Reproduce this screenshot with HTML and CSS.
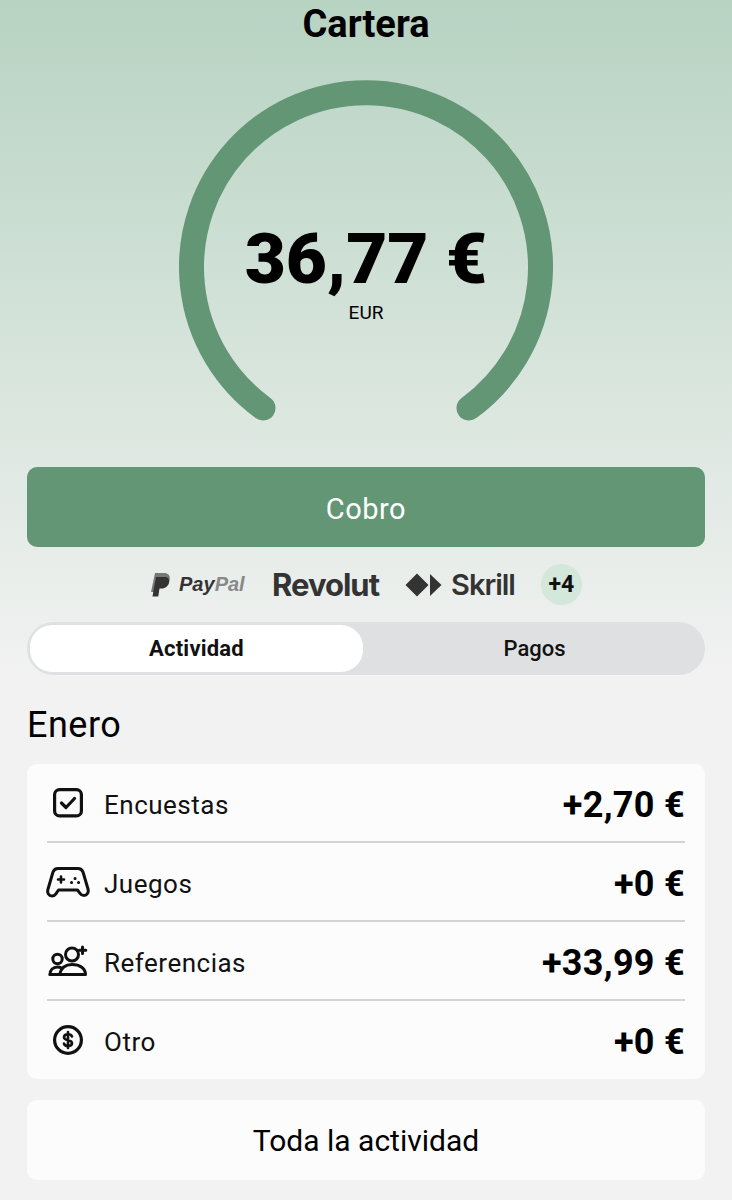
FILE: index.html

```html
<!DOCTYPE html>
<html lang="es">
<head>
  <meta charset="UTF-8" />
  <meta name="viewport" content="width=device-width, initial-scale=1.0"/>
  <title>Cartera</title>
  <link rel="stylesheet" href="styles.css">
</head>
<body>
  <header class="top"><h1>Cartera</h1></header>

  <section class="gauge">
    <svg class="gauge-ring" width="374" height="342" viewBox="0 0 374 342">
      <path d="M84 328 A174.500 174.500 0 1 1 290 328" fill="none" stroke="#639675" stroke-width="25" stroke-linecap="round"/>
    </svg>
    <div class="gauge-text">
      <div class="balance">36,77 €</div>
      <div class="currency">EUR</div>
    </div>
  </section>

  <main>
    <button class="cash-btn">Cobro</button>

    <div class="pay-logos">
      <span class="logo-paypal">
        <svg width="21" height="24" viewBox="0 0 21 24">
          <path d="M5 0h9c4 0 6.500 2.500 5.700 6.500C18.700 11 15.500 13.500 11 13.500H8.500L7.300 19H1z" fill="#777"/>
          <path d="M6 4h8.500c3 0 5.300 2 4.700 5C18.500 13 15.500 15.500 11.500 15.500H9.500L8.300 23.500H2.500l1.200-7z" fill="#333"/>
        </svg>
        <span class="pay">Pay</span><span class="pal">Pal</span>
      </span>
      <span class="logo-revolut">Revolut</span>
      <span class="logo-skrill">
        <svg width="37" height="24" viewBox="0 0 37 24">
          <path d="M12 0.500 L23.500 12 L12 23.500 L0.500 12 Z" fill="#333"/>
          <path d="M25 1 L36.500 12 L25 23 Z" fill="#333"/>
        </svg>
        Skrill
      </span>
      <span class="more">+4</span>
    </div>

    <div class="tabs">
      <button class="tab-button active">Actividad</button>
      <button class="tab-button">Pagos</button>
    </div>

    <h2 class="month">Enero</h2>

    <div class="card">
      <div class="row">
        <span class="row-icon">
          <svg width="34" height="34" viewBox="0 0 34 34" fill="none" stroke="#111" stroke-width="3.200" stroke-linecap="round" stroke-linejoin="round">
            <rect x="3.600" y="3.600" width="26.800" height="26.300" rx="5"/>
            <path d="M10.500 17l4.500 4.500 8.500-9"/>
          </svg>
        </span>
        <span class="row-name">Encuestas</span>
        <span class="row-value">+2,70 €</span>
      </div>
      <div class="row">
        <span class="row-icon">
          <svg width="44" height="32" viewBox="0 0 44 32" fill="none" stroke="#111" stroke-width="3" stroke-linecap="round" stroke-linejoin="round">
            <path d="M12 2.500h20c2.500 0 4 1 5 3.500l5 17c1 3.500-1 6.500-4 6.500-1.800 0-3-.8-4-2.200L31.500 24h-19L9.900 27.800c-1 1.400-2.200 2.200-4 2.200-3 0-5-3-4-6.500L7 6c1-2.500 2.500-3.500 5-3.500z"/>
            <path d="M15 10.500v6M12 13.500h6" stroke-width="2.600"/>
            <path d="M29 12.500h.1M25.500 16.500h.1M32.500 16.500h.1" stroke-width="3"/>
          </svg>
        </span>
        <span class="row-name">Juegos</span>
        <span class="row-value">+0 €</span>
      </div>
      <div class="row">
        <span class="row-icon">
          <svg width="40" height="32" viewBox="0 0 40 32" fill="none" stroke="#111" stroke-width="3" stroke-linecap="round" stroke-linejoin="round">
            <circle cx="9.500" cy="14" r="4.700"/>
            <circle cx="24" cy="9.500" r="6.500"/>
            <path d="M2 29.500c0-4.500 3-7.500 7.500-7.500 1.500 0 3 .4 4 1"/>
            <path d="M2 29.500h35.500c0-6-5.500-10-13.500-10-6.500 0-11 3.500-12.500 10"/>
            <path d="M34.500 2v6.500M31.200 5.200h6.600"/>
          </svg>
        </span>
        <span class="row-name">Referencias</span>
        <span class="row-value">+33,99 €</span>
      </div>
      <div class="row">
        <span class="row-icon">
          <svg width="34" height="34" viewBox="0 0 34 34" fill="none" stroke="#111" stroke-width="3.200" stroke-linecap="round" stroke-linejoin="round">
            <circle cx="17" cy="17" r="13.400"/>
            <path stroke-width="2.600" d="M21 13.500c-.5-1.500-2-2.300-4-2.300-2.300 0-4 1.200-4 3 0 4 8 2 8 5.800 0 1.800-1.700 3-4 3-2 0-3.600-.9-4-2.400M17 9v16"/>
          </svg>
        </span>
        <span class="row-name">Otro</span>
        <span class="row-value">+0 €</span>
      </div>
    </div>

    <button class="all-btn">Toda la actividad</button>
  </main>
</body>
</html>
```

FILE: styles.css

```css
html, body { margin: 0; padding: 0; }
body { width: 732px; height: 1200px; overflow: hidden; font-family: Roboto, "Noto Sans", sans-serif; color: #000; background: linear-gradient(#b7d3c2 0, #dce7e0 420px, #f2f2f2 680px); }
button { font-family: inherit; border: none; cursor: pointer; }

.top { height: 48px; display: flex; align-items: center; justify-content: center; }
h1 { margin: 0; font-size: 38px; font-weight: 700; line-height: 50px; }

.gauge { height: 387px; margin-top: 32px; display: flex; justify-content: center; position: relative; }
.gauge-ring { display: block; }
.gauge-text { position: absolute; top: 139px; left: 0; right: 0; text-align: center; }
.balance { font-size: 71px; font-weight: 900; line-height: 80px; }
.currency { font-size: 19px; line-height: 20px; margin-top: 4px; }

main { padding: 0 27px; }
.cash-btn { display: block; width: 100%; height: 80px; padding: 3px 0 0; background: #639675; color: #fff; font-size: 29px; border-radius: 10px; letter-spacing: 0.5px; }

.pay-logos { height: 75px; display: flex; align-items: center; justify-content: center; gap: 26px; color: #333; }
.logo-paypal { display: flex; align-items: center; gap: 8px; font-size: 20px; font-weight: 800; font-style: italic; font-family: "Liberation Sans", sans-serif; width: 96px; }
.pal { color: #888; margin-left: -8px; }
.logo-revolut { font-family: "Inter", sans-serif; font-size: 31px; font-weight: 700; letter-spacing: -1px; }
.logo-skrill { display: flex; align-items: center; gap: 9px; font-family: "Inter", sans-serif; font-size: 29px; font-weight: 600; letter-spacing: -1px; }
.more { width: 41px; height: 41px; border-radius: 50%; background: #d3e7da; color: #111; font-size: 23px; font-weight: 700; display: flex; align-items: center; justify-content: center; }

.tabs { height: 53px; display: flex; background: #dfe0e2; border-radius: 27px; padding: 3px; box-sizing: border-box; }
.tab-button { flex: 1; background: none; font-size: 22px; font-weight: 500; color: #111; border-radius: 22px; padding: 0 0 0 4px; }
.tab-button.active { flex: none; width: 333px; background: #fff; font-weight: 700; padding: 0; letter-spacing: 0.2px; }

.month { margin: 0; height: 89px; font-size: 36px; font-weight: 400; line-height: 100px; letter-spacing: 0.5px; }

.card { background: #fcfcfc; border-radius: 10px; padding: 0 20px; }
.row { height: 77px; display: flex; align-items: center; border-bottom: 2px solid #d4d4d4; }
.row:last-child { height: 78px; border-bottom: none; }
.row-icon { width: 42px; margin-right: 15px; display: flex; justify-content: center; flex: none; }
.row-icon svg { flex: none; }
.row-name { flex: 1; padding-top: 4px; font-size: 26px; color: #111; letter-spacing: 0.5px; }
.row-value { padding-top: 4px; font-size: 36px; font-weight: 700; letter-spacing: 0.3px; }

.all-btn { display: block; width: 100%; height: 80px; margin-top: 21px; background: #fcfcfc; color: #000; font-size: 30px; border-radius: 10px; }
```
